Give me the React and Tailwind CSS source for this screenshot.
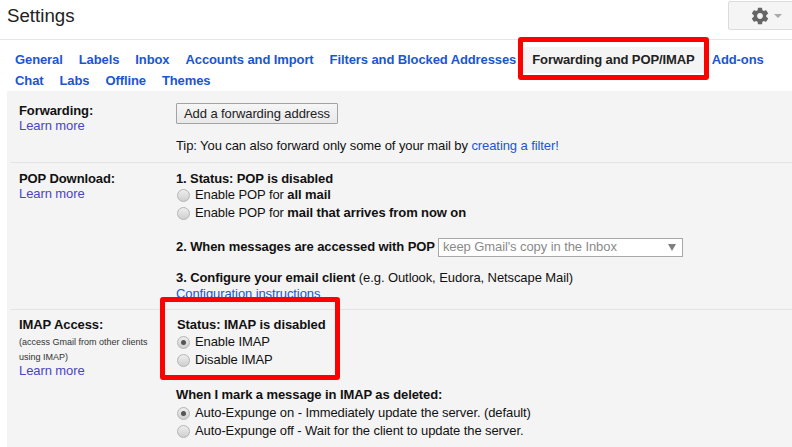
import React from 'react';

const tabsTop = ['General', 'Labels', 'Inbox', 'Accounts and Import', 'Filters and Blocked Addresses'];
const tabsBottom = ['Chat', 'Labs', 'Offline', 'Themes'];

function Radio({ checked, label, className = '' }) {
  return (
    <div className={`flex h-[18px] items-center ${className}`}>
      <span className="ml-[1px] mr-[5px] flex h-[13px] w-[13px] items-center justify-center rounded-full border border-[#b4b4b4] bg-gradient-to-b from-[#eeeeee] to-[#cfcfcf]">
        {checked && <span className="h-[5px] w-[5px] rounded-full bg-[#555555]" />}
      </span>
      <span>{label}</span>
    </div>
  );
}

function LearnMore() {
  return <div className="h-[15px] leading-[15px] text-[#4a44c6]">Learn more</div>;
}

export default function App() {
  return (
    <div className="relative h-[447px] w-[792px] overflow-hidden bg-white font-['Liberation_Sans',Arial,sans-serif] text-[13px] tracking-[-0.09px] text-[#111111]">
      {/* Header */}
      <header className="flex h-[40px] items-start justify-between border-b border-[#e5e5e5] pl-[7px]">
        <h1 className="mt-[2px] text-[18.7px] leading-[28px] tracking-normal text-[#222222]">Settings</h1>
        <button className="mt-[1px] -mr-[2px] flex h-[29px] w-[66px] items-center justify-end gap-[4px] rounded-[2px] border border-[#dcdcdc] bg-[#f5f5f5] pr-[11px]">
          <svg viewBox="0 0 24 24" className="h-[20px] w-[20px]" fill="#666666">
            <path d="M19.43 12.98c.04-.32.07-.64.07-.98s-.03-.66-.07-.98l2.11-1.65c.19-.15.24-.42.12-.64l-2-3.46c-.12-.22-.39-.3-.61-.22l-2.49 1c-.52-.4-1.08-.73-1.69-.98l-.38-2.65C14.46 2.18 14.25 2 14 2h-4c-.25 0-.46.18-.49.42l-.38 2.65c-.61.25-1.17.59-1.69.98l-2.49-1c-.23-.09-.49 0-.61.22l-2 3.46c-.13.22-.07.49.12.64l2.11 1.65c-.04.32-.07.65-.07.98s.03.66.07.98l-2.11 1.65c-.19.15-.24.42-.12.64l2 3.46c.12.22.39.3.61.22l2.49-1c.52.4 1.08.73 1.69.98l.38 2.65c.03.24.24.42.49.42h4c.25 0 .46-.18.49-.42l.38-2.65c.61-.25 1.17-.59 1.69-.98l2.49 1c.23.09.49 0 .61-.22l2-3.46c.12-.22.07-.49-.12-.64l-2.11-1.65zM12 15.5c-1.93 0-3.5-1.57-3.5-3.5s1.57-3.5 3.5-3.5 3.5 1.57 3.5 3.5-1.57 3.5-3.5 3.5z" />
          </svg>
          <span className="h-0 w-0 border-x-[4px] border-t-[4px] border-x-transparent border-t-[#aaaaaa]" />
        </button>
      </header>

      {/* Tabs */}
      <nav className="h-[51px] pl-[15px] pt-[7px] font-bold tracking-[-0.1px] text-[#1a56d0]">
        <div className="flex h-[26px] items-center">
          <div className="flex gap-[16px]">
            {tabsTop.map((tab) => (
              <span key={tab} className="whitespace-nowrap">{tab}</span>
            ))}
          </div>
          <span className="ml-[7px] flex h-[26px] items-center whitespace-nowrap bg-[#f4f4f4] px-[9px] text-[#222222]">
            Forwarding and POP/IMAP
          </span>
          <span className="ml-[8px] whitespace-nowrap">Add-ons</span>
        </div>
        <div className="mt-[1px] flex h-[14px] items-center gap-[16px]">
          {tabsBottom.map((tab) => (
            <span key={tab}>{tab}</span>
          ))}
        </div>
      </nav>

      {/* Settings panel */}
      <main className="ml-[7px] h-[356px] bg-[#f4f4f4] pl-[4px]">
        <section className="flex h-[72px] border-b border-[#e3e3e3] pl-[8px] pt-[12px]">
          <div className="w-[157px]">
            <div className="h-[15px] font-bold leading-[15px]">Forwarding:</div>
            <LearnMore />
          </div>
          <div>
            <button className="h-[21px] w-[162px] rounded-[1px] border border-[#a3a3a3] bg-gradient-to-b from-[#f6f6f6] to-[#e9e9e9] text-[13px] text-[#222222]">
              Add a forwarding address
            </button>
            <div className="mt-[14px] leading-[15px]">
              Tip: You can also forward only some of your mail by <span className="text-[#1a56d0]">creating a filter!</span>
            </div>
          </div>
        </section>

        <section className="flex h-[147px] border-b border-[#e3e3e3] pl-[8px] pt-[8px]">
          <div className="w-[157px]">
            <div className="h-[15px] font-bold leading-[15px]">POP Download:</div>
            <LearnMore />
          </div>
          <div>
            <div className="h-[15px] font-bold leading-[15px] tracking-[-0.12px]">1. Status: POP is disabled</div>
            <Radio label={<>Enable POP for <b>all mail</b></>} />
            <Radio label={<>Enable POP for <b>mail that arrives from now on</b></>} />
            <div className="mt-[14px] flex h-[22px] items-center">
              <b>2. When messages are accessed with POP</b>
              <div className="ml-[3px] flex h-[19px] w-[245px] items-center justify-between border border-[#a8a8a8] bg-white pl-[4px] pr-[6px] text-[#8a8a8a]">
                <span>keep Gmail's copy in the Inbox</span>
                <span className="h-0 w-0 border-x-[4px] border-t-[7px] border-x-transparent border-t-[#808080]" />
              </div>
            </div>
            <div className="mt-[12px] h-[15px] leading-[15px]">
              <b>3. Configure your email client</b> (e.g. Outlook, Eudora, Netscape Mail)
            </div>
            <div className="mt-[1px] h-[15px] leading-[15px] text-[#1a56d0]">Configuration instructions</div>
          </div>
        </section>

        <section className="flex pl-[8px] pt-[7px]">
          <div className="w-[157px]">
            <div className="h-[15px] font-bold leading-[15px]">IMAP Access:</div>
            <div className="mt-[3px] h-[28px] text-[9px] leading-[15px] tracking-normal text-[#333333]">
              (access Gmail from other clients<br />using IMAP)
            </div>
            <LearnMore />
          </div>
          <div>
            <div className="h-[15px] pl-[1px] font-bold leading-[15px]">Status: IMAP is disabled</div>
            <Radio className="mt-[1px]" checked label="Enable IMAP" />
            <Radio label="Disable IMAP" />
            <div className="mt-[18px] h-[15px] font-bold leading-[15px]">When I mark a message in IMAP as deleted:</div>
            <Radio className="mt-[2px]" checked label="Auto-Expunge on - Immediately update the server. (default)" />
            <Radio label="Auto-Expunge off - Wait for the client to update the server." />
          </div>
        </section>
      </main>

      {/* Red annotation boxes drawn over the screenshot */}
      <div className="absolute left-[518px] top-[37px] h-[43px] w-[191px] rounded-[3px] border-[5px] border-[#ff0000]" />
      <div className="absolute left-[160px] top-[297px] h-[83px] w-[180px] rounded-[3px] border-[5px] border-[#ff0000]" />
    </div>
  );
}
